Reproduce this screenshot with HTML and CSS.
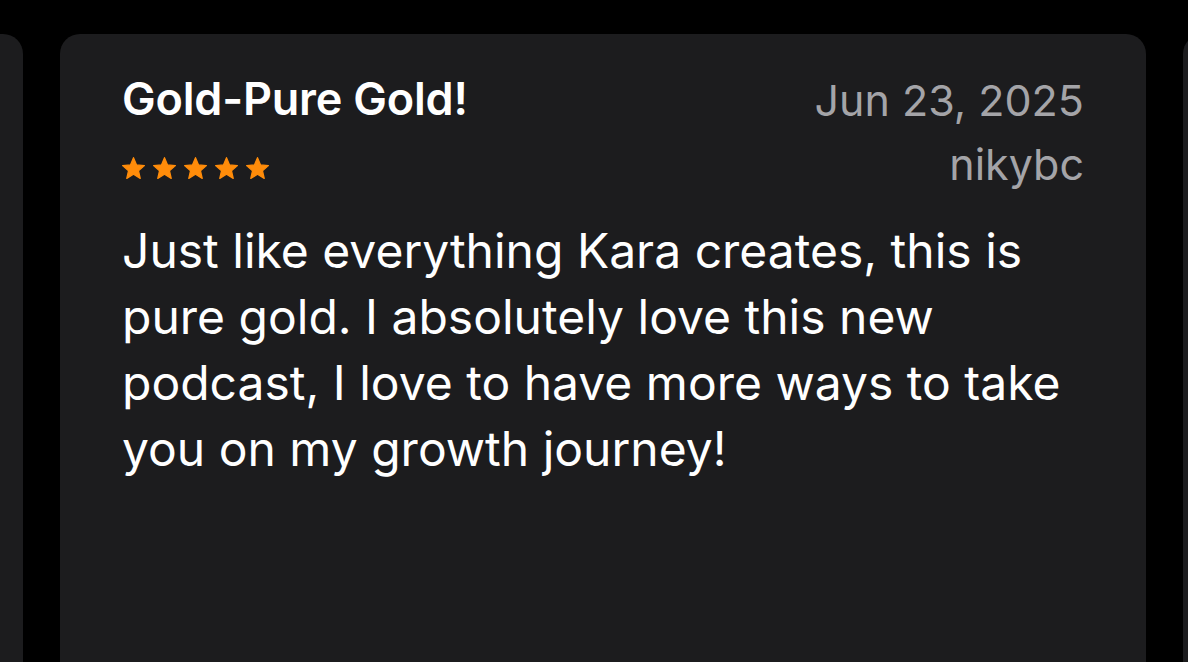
FILE: index.html
```html
<!DOCTYPE html>
<html>
<head>
<meta charset="utf-8">
<link rel="stylesheet" href="styles.css">
</head>
<body>
<div class="carousel">
  <div class="track">
    <div class="card"></div>
    <article class="card">
      <header class="head">
        <div class="head-left">
          <h2 class="title">Gold-Pure Gold!</h2>
          <div class="stars" aria-label="5 stars">
            <svg viewBox="0 0 24 24"><path d="M12 1.6L14.94 8.56L22.46 9.2L16.76 14.15L18.47 21.5L12 17.6L5.53 21.5L7.24 14.15L1.54 9.2L9.06 8.56Z"/></svg>
            <svg viewBox="0 0 24 24"><path d="M12 1.6L14.94 8.56L22.46 9.2L16.76 14.15L18.47 21.5L12 17.6L5.53 21.5L7.24 14.15L1.54 9.2L9.06 8.56Z"/></svg>
            <svg viewBox="0 0 24 24"><path d="M12 1.6L14.94 8.56L22.46 9.2L16.76 14.15L18.47 21.5L12 17.6L5.53 21.5L7.24 14.15L1.54 9.2L9.06 8.56Z"/></svg>
            <svg viewBox="0 0 24 24"><path d="M12 1.6L14.94 8.56L22.46 9.2L16.76 14.15L18.47 21.5L12 17.6L5.53 21.5L7.24 14.15L1.54 9.2L9.06 8.56Z"/></svg>
            <svg viewBox="0 0 24 24"><path d="M12 1.6L14.94 8.56L22.46 9.2L16.76 14.15L18.47 21.5L12 17.6L5.53 21.5L7.24 14.15L1.54 9.2L9.06 8.56Z"/></svg>
          </div>
        </div>
        <div class="head-right">
          <div class="date">Jun 23, 2025</div>
          <div class="author">nikybc</div>
        </div>
      </header>
      <p class="body">Just like everything Kara creates, this is pure gold. I absolutely love this new podcast, I love to have more ways to take you on my growth journey!</p>
    </article>
    <div class="card"></div>
  </div>
</div>
</body>
</html>
```
FILE: styles.css
```css
html, body {
  margin: 0;
  padding: 0;
  background: #000;
  overflow: hidden;
  height: 100%;
}
body {
  font-family: Inter, "Liberation Sans", sans-serif;
  color: #fff;
}
.carousel {
  padding-top: 34px;
}
.track {
  display: flex;
  gap: 37px;
  margin-left: -1063px;
}
.card {
  flex: 0 0 1086px;
  height: 720px;
  background: #1c1c1e;
  border-radius: 20px;
  box-sizing: border-box;
  padding: 38px 62px 0 62px;
}
.head {
  display: flex;
  justify-content: space-between;
  align-items: flex-start;
}
.title {
  margin: 0;
  font-size: 45px;
  font-weight: 600;
  line-height: 54px;
  letter-spacing: -0.2px;
}
.stars {
  display: flex;
  gap: 6px;
  margin-top: 30px;
  margin-left: -1px;
}
.stars svg {
  width: 25px;
  height: 25px;
  fill: #ff8c0a;
  stroke: #ff8c0a;
  stroke-width: 1.2;
  stroke-linejoin: round;
}
.head-right {
  text-align: right;
  color: #a4a4a8;
  font-size: 43px;
  line-height: 64px;
  margin-top: -4px;
}
.body {
  margin: 22px 0 0;
  font-size: 48px;
  line-height: 66px;
}
```
